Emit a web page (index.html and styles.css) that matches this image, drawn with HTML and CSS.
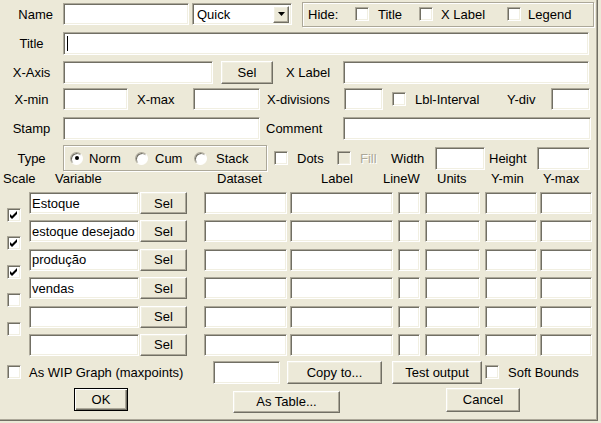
FILE: index.html
```html
<!DOCTYPE html>
<html>
<head>
<meta charset="utf-8">
<title>Graph</title>
<link rel="stylesheet" href="styles.css">
</head>
<body>
<div class="dialog">
  <div class="row r1">
    <span class="lbl lbl-name">Name</span>
    <div class="field w-name"></div>
    <div class="field combo">
      <span class="combo-text">Quick</span>
      <span class="btn combo-btn"><svg width="7" height="4" viewBox="0 0 7 4"><polygon points="0,0 7,0 3.5,4" fill="#000"/></svg></span>
    </div>
    <div class="group hide">
      <span class="hide-lbl">Hide:</span>
      <span class="cb"></span><span class="hcol hc1">Title</span>
      <span class="cb"></span><span class="hcol hc2">X Label</span>
      <span class="cb"></span><span class="hcol hc3">Legend</span>
    </div>
  </div>

  <div class="row r2">
    <span class="lbl lbl-c">Title</span>
    <div class="field w-title"><span class="caret"></span></div>
  </div>

  <div class="row r3">
    <span class="lbl lbl-c">X-Axis</span>
    <div class="field w-xaxis"></div>
    <div class="btn sel-x">Sel</div>
    <span class="lbl lbl-xlabel">X Label</span>
    <div class="field w-xlabel"></div>
  </div>

  <div class="row r4">
    <span class="lbl lbl-c">X-min</span>
    <div class="field w-xmin"></div>
    <span class="lbl lbl-xmax">X-max</span>
    <div class="field w-xmax"></div>
    <span class="lbl lbl-xdiv">X-divisions</span>
    <div class="field w-xdiv"></div>
    <span class="cb cb-lbl-int"></span>
    <span class="lbl lbl-int">Lbl-Interval</span>
    <span class="lbl lbl-ydiv">Y-div</span>
    <div class="field w-ydiv"></div>
  </div>

  <div class="row r5">
    <span class="lbl lbl-c">Stamp</span>
    <div class="field w-stamp"></div>
    <span class="lbl lbl-comment">Comment</span>
    <div class="field w-comment"></div>
  </div>

  <div class="row r6">
    <span class="lbl lbl-c">Type</span>
    <div class="group typebox">
      <span class="radio on"></span><span class="rcol rc1">Norm</span>
      <span class="radio"></span><span class="rcol rc2">Cum</span>
      <span class="radio"></span><span class="rcol rc3">Stack</span>
    </div>
    <span class="cb cb-dots"></span>
    <span class="lbl lbl-dots">Dots</span>
    <span class="cb disabled"></span>
    <span class="lbl lbl-fill">Fill</span>
    <span class="lbl lbl-width">Width</span>
    <div class="field w-width"></div>
    <span class="lbl lbl-height">Height</span>
    <div class="field w-height"></div>
  </div>

  <div class="head">
    <span class="h-scale">Scale</span>
    <span>Variable</span>
    <span>Dataset</span>
    <span>Label</span>
    <span>LineW</span>
    <span>Units</span>
    <span>Y-min</span>
    <span>Y-max</span>
  </div>

  <div class="vars">
    <div class="vrow">
      <div class="scell"><span class="cb"><svg class="chk" width="12" height="12" viewBox="0 0 12 12"><polygon points="2,5 4,7 9,2 9,5 4,10 2,8"/></svg></span></div>
      <div class="field v-var">Estoque</div>
      <div class="btn v-sel">Sel</div>
      <div class="field v-ds"></div><div class="field v-lab"></div><div class="field v-lw"></div><div class="field v-units"></div><div class="field v-ymin"></div><div class="field v-ymax"></div>
    </div>
    <div class="vrow">
      <div class="scell"><span class="cb"><svg class="chk" width="12" height="12" viewBox="0 0 12 12"><polygon points="2,5 4,7 9,2 9,5 4,10 2,8"/></svg></span></div>
      <div class="field v-var">estoque desejado</div>
      <div class="btn v-sel">Sel</div>
      <div class="field v-ds"></div><div class="field v-lab"></div><div class="field v-lw"></div><div class="field v-units"></div><div class="field v-ymin"></div><div class="field v-ymax"></div>
    </div>
    <div class="vrow">
      <div class="scell"><span class="cb"><svg class="chk" width="12" height="12" viewBox="0 0 12 12"><polygon points="2,5 4,7 9,2 9,5 4,10 2,8"/></svg></span></div>
      <div class="field v-var">produção</div>
      <div class="btn v-sel">Sel</div>
      <div class="field v-ds"></div><div class="field v-lab"></div><div class="field v-lw"></div><div class="field v-units"></div><div class="field v-ymin"></div><div class="field v-ymax"></div>
    </div>
    <div class="vrow">
      <div class="scell"><span class="cb"></span></div>
      <div class="field v-var">vendas</div>
      <div class="btn v-sel">Sel</div>
      <div class="field v-ds"></div><div class="field v-lab"></div><div class="field v-lw"></div><div class="field v-units"></div><div class="field v-ymin"></div><div class="field v-ymax"></div>
    </div>
    <div class="vrow">
      <div class="scell"><span class="cb"></span></div>
      <div class="field v-var"></div>
      <div class="btn v-sel">Sel</div>
      <div class="field v-ds"></div><div class="field v-lab"></div><div class="field v-lw"></div><div class="field v-units"></div><div class="field v-ymin"></div><div class="field v-ymax"></div>
    </div>
    <div class="vrow">
      <div class="scell"></div>
      <div class="field v-var"></div>
      <div class="btn v-sel">Sel</div>
      <div class="field v-ds"></div><div class="field v-lab"></div><div class="field v-lw"></div><div class="field v-units"></div><div class="field v-ymin"></div><div class="field v-ymax"></div>
    </div>
  </div>

  <div class="row r-bottom">
    <span class="cb cb-wip"></span>
    <span class="lbl lbl-wip">As WIP Graph (maxpoints)</span>
    <div class="field w-wip"></div>
    <div class="btn b-copy">Copy to...</div>
    <div class="btn b-test">Test output</div>
    <span class="cb cb-soft"></span>
    <span class="lbl lbl-soft">Soft Bounds</span>
  </div>

  <div class="row r-buttons">
    <div class="btn b-ok">OK</div>
    <div class="btn b-table">As Table...</div>
    <div class="btn b-cancel">Cancel</div>
  </div>
</div>
</body>
</html>
```

FILE: styles.css
```css
body {
  margin: 0;
  background: #ECE9D8;
  font-family: "Liberation Sans", Arial, sans-serif;
  font-size: 13px;
  color: #000;
}

.dialog {
  width: 598px;
  height: 421px;
  box-sizing: border-box;
  border-right: 1px solid #716F64;
  border-bottom: 1px solid #716F64;
  box-shadow: inset -1px -1px 0 #ACA899;
  padding-top: 3px;
  overflow: hidden;
}

.row {
  display: flex;
  align-items: center;
}

.lbl {
  flex: none;
  white-space: nowrap;
  box-sizing: border-box;
}

.lbl-c {
  width: 63px;
  text-align: center;
}

.lbl-name {
  width: 63px;
  text-align: right;
  padding-right: 10px;
}

/* sunken edit field */
.field {
  flex: none;
  box-sizing: border-box;
  background: #fff;
  border: 1px solid;
  border-color: #ACA899 #fff #fff #ACA899;
  box-shadow: inset 1px 1px 0 #716F64, inset -1px -1px 0 #F1EFE2;
  display: flex;
  align-items: center;
  padding-left: 2px;
  white-space: nowrap;
  overflow: hidden;
}

/* raised push button */
.btn {
  flex: none;
  box-sizing: border-box;
  background: #ECE9D8;
  border: 1px solid;
  border-color: #fff #716F64 #716F64 #fff;
  box-shadow: inset -1px -1px 0 #ACA899, inset 1px 1px 0 #F1EFE2;
  display: flex;
  align-items: center;
  justify-content: center;
  white-space: nowrap;
}

/* checkbox */
.cb {
  flex: none;
  width: 14px;
  height: 14px;
  box-sizing: border-box;
  background: #fff;
  border: 1px solid;
  border-color: #ACA899 #fff #fff #ACA899;
  box-shadow: inset 1px 1px 0 #716F64, inset -1px -1px 0 #F1EFE2;
  display: block;
}

.cb.disabled {
  background: #ECE9D8;
}

.chk {
  display: block;
  fill: #000;
}

/* radio */
.radio {
  flex: none;
  width: 13px;
  height: 13px;
  box-sizing: border-box;
  border-radius: 50%;
  background: #fff;
  border: 1px solid;
  border-color: #ACA899 #fff #fff #ACA899;
  box-shadow: inset 1px 1px 0 #716F64;
  display: flex;
  align-items: center;
  justify-content: center;
}

.radio.on::after {
  content: "";
  width: 4px;
  height: 4px;
  border-radius: 50%;
  background: #000;
}

/* etched group box */
.group {
  flex: none;
  box-sizing: border-box;
  border: 1px solid #ACA899;
  box-shadow: inset 1px 1px 0 #fff, 1px 1px 0 #fff;
  display: flex;
  align-items: center;
}

/* ---- row 1 ---- */
.r1 { height: 22px; }
.w-name { width: 126px; height: 22px; }

.combo {
  width: 100px;
  height: 22px;
  margin-left: 3px;
  padding-left: 4px;
  padding-right: 2px;
  justify-content: space-between;
}

.combo-btn {
  width: 16px;
  height: 17px;
}

.hide {
  width: 292px;
  height: 25px;
  margin-left: 10px;
  padding-left: 5px;
}

.hide-lbl { width: 47px; }
.hcol { box-sizing: border-box; white-space: nowrap; }
.hc1 { width: 50px; padding-left: 9px; }
.hc2 { width: 74px; padding-left: 8px; }
.hc3 { padding-left: 7px; }

.caret {
  width: 1px;
  height: 15px;
  background: #000;
  margin-left: 1px;
}

/* ---- row 2 ---- */
.r2 { height: 23px; margin-top: 7px; }
.w-title { width: 526px; height: 23px; }

/* ---- row 3 ---- */
.r3 { height: 23px; margin-top: 6px; }
.w-xaxis { width: 150px; height: 23px; }
.sel-x { width: 52px; height: 23px; margin-left: 8px; }
.lbl-xlabel { width: 70px; text-align: center; }
.w-xlabel { width: 246px; height: 23px; }

/* ---- row 4 ---- */
.r4 { height: 22px; margin-top: 4px; }
.w-xmin { width: 65px; height: 22px; }
.lbl-xmax { width: 65px; padding-left: 9px; }
.w-xmax { width: 67px; height: 22px; }
.lbl-xdiv { width: 84px; padding-left: 7px; }
.w-xdiv { width: 39px; height: 22px; }
.cb-lbl-int { margin-left: 9px; }
.lbl-int { width: 80px; padding-left: 9px; }
.lbl-ydiv { width: 65px; padding-left: 21px; }
.w-ydiv { width: 39px; height: 22px; }

/* ---- row 5 ---- */
.r5 { height: 23px; margin-top: 7px; }
.w-stamp { width: 197px; height: 23px; }
.lbl-comment { width: 83px; padding-left: 6px; }
.w-comment { width: 248px; height: 23px; }

/* ---- row 6 ---- */
.r6 { height: 26px; margin-top: 5px; }

.typebox {
  width: 204px;
  height: 26px;
  padding-left: 6px;
}

.rcol { box-sizing: border-box; white-space: nowrap; }
.rc1 { width: 52px; padding-left: 6px; }
.rc2 { width: 46px; padding-left: 7px; }
.rc3 { padding-left: 9px; }

.cb-dots { margin-left: 7px; }
.lbl-dots { width: 49px; padding-left: 9px; }
.lbl-fill {
  width: 40px;
  padding-left: 9px;
  color: #ACA899;
  text-shadow: 1px 1px 0 #fff;
}
.lbl-width { width: 44px; }
.w-width { width: 50px; height: 23px; }
.lbl-height { width: 52px; padding-left: 4px; }
.w-height { width: 53px; height: 23px; }

/* ---- header ---- */
.head {
  display: grid;
  grid-template-columns: 55px 162px 104px 62px 54px 54px 52px 1fr;
  height: 15px;
  align-items: center;
  white-space: nowrap;
}

.h-scale { padding-left: 3px; }

/* ---- variable rows ---- */
.vars {
  display: flex;
  flex-direction: column;
  gap: 6.4px;
  margin-top: 6px;
}

.vrow {
  display: flex;
  height: 22px;
}

.vrow .field { height: 22px; }

.scell {
  flex: none;
  width: 29px;
  height: 22px;
}

.scell .cb {
  margin-left: 7px;
  margin-top: 16px;
}

.v-var { width: 110px; }
.v-sel { width: 47px; height: 22px; margin-left: 1px; }
.v-ds { width: 83px; margin-left: 17px; }
.v-lab { width: 103px; margin-left: 3px; }
.v-lw { width: 22px; margin-left: 5px; }
.v-units { width: 55px; margin-left: 5px; }
.v-ymin { width: 52px; margin-left: 5px; }
.v-ymax { width: 52px; margin-left: 3px; }

/* ---- bottom row ---- */
.r-bottom { height: 23px; margin-top: 5px; }
.cb-wip { margin-left: 7px; }
.lbl-wip { width: 192px; padding-left: 8px; }
.w-wip { width: 67px; height: 23px; }
.b-copy { width: 95px; height: 23px; margin-left: 7px; }
.b-test { width: 90px; height: 23px; margin-left: 10px; }
.cb-soft { margin-left: 3px; }
.lbl-soft { padding-left: 9px; }

/* ---- button row ---- */
.r-buttons {
  height: 26px;
  margin-top: 4px;
  align-items: flex-start;
}

.b-ok {
  width: 54px;
  height: 23px;
  margin-left: 74px;
  border: 1px solid #000;
  box-shadow: inset 1px 1px 0 #fff, inset -1px -1px 0 #716F64, inset -2px -2px 0 #ACA899;
}

.b-table {
  width: 107px;
  height: 22px;
  margin-left: 105px;
  margin-top: 3px;
}

.b-cancel {
  width: 74px;
  height: 24px;
  margin-left: 106px;
}
```
